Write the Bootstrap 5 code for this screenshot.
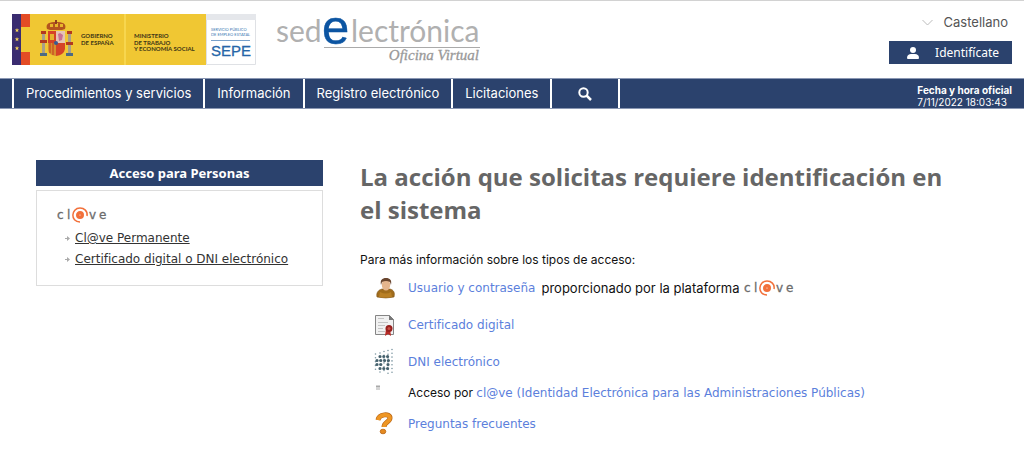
<!DOCTYPE html>
<html lang="es">
<head>
<meta charset="utf-8">
<meta name="viewport" content="width=device-width, initial-scale=1">
<title>SEPE - Sede electrónica</title>
<link rel="stylesheet" href="https://cdn.jsdelivr.net/npm/bootstrap@5.3.0/dist/css/bootstrap.min.css">
<style>
:root { --navy: #2b426d; --link: #5c7fdc; }
body { font-family: Inter, sans-serif; font-size: 12px; line-height: 18px; color: #111; background: #fff; border-top: 1px solid #d2d2d2; }
.verd { font-family: "DejaVu Sans", Verdana, sans-serif; font-size: 12px; }
.top-bar { padding: 13px 12px; }
.brand-row { gap: 19px; }
.user-tools { gap: 11px; }
.lang { border: 0; background: none; padding: 0 4px 0 0; font-size: 13px; line-height: 16px; color: #555; gap: 11px; }
.ident { background: var(--navy); color: #fff; border: 0; border-radius: 0; font: 12px/23px "Noto Sans", sans-serif; padding: 0 13px 0 18px; gap: 16px; }
.main-nav { background: var(--navy); border-top: 1px solid #8a97b3; border-bottom: 1px solid #8a97b3; padding: 0 12px; }
.main-nav ul { border-left: 2px solid #fff; }
.main-nav .nav-link { color: #fff; font-size: 13px; line-height: 29px; padding: 0 12px; border-right: 2px solid #fff; }
.main-nav button.nav-link { background: none; padding: 0 26px; border-radius: 0; border-width: 0 2px 0 0; height: 29px; }
.clock { color: #fff; font-size: 10px; line-height: 12px; padding-top: 5px; }
.content-row { padding: 51px 36px 16px; gap: 37px; }
.side { flex: 0 0 287px; }
.side h2 { background: var(--navy); color: #fff; font: bold 13px/26px "Noto Sans", sans-serif; margin: 0 0 4px; text-align: center; }
.side-box { border: 1px solid #ddd; padding: 15px 20px; }
.side-box li { line-height: 21px; gap: 5px; padding-left: 8px; }
.side-box a { color: #333; }
.info { max-width: 592px; }
.info h1 { font: bold 24px/33px "Open Sans", sans-serif; color: #666; margin: 0 0 25px; }
.info p { margin: 0 0 3px; }
.info ul { gap: 5px; padding-left: 14px; }
.info li { gap: 12px; min-height: 32px; }
.info li.compact { min-height: 20px; }
.info li a { color: var(--link); text-decoration: none; }
.ico { flex: 0 0 22px; }
.platform { font-size: 13px; margin: 0 4px 0 6px; }
</style>
</head>
<body>
<header>
  <div class="top-bar d-flex justify-content-between align-items-start">
    <div class="brand-row d-flex">
      <svg width="245" height="51" viewBox="0 0 245 51" role="img" aria-label="Gobierno de España, SEPE">
        <path fill="#f0c733" d="M0 0h194v51H0z"/>
        <path fill="#3a2c70" d="M0 0h9v51H0z"/><path fill="#e34b25" d="M9 0h9v13H9zM9 38h9v13H9z"/>
        <path fill="#f7d64e" d="M112 0h2v51h-2z"/>
        <g fill="#f4d258"><path id="st" d="M5 14l.6 1.600h1.700l-1.400 1 .5 1.700L5 17.300l-1.400 1 .5-1.700-1.400-1h1.700z"/><use href="#st" y="9"/><use href="#st" y="18"/></g>
        <g>
          <path fill="#b4541e" d="M35 15c-2-6 3-7 9-7s11 1 9 7l-3 1H38z"/><path fill="#e8b72c" d="M38 10h3v3h-3zM43 9h3v4h-3zM48 10h3v3h-3z"/><path fill="#8e3b20" d="M43 6h2v4h-2z"/>
          <path fill="#a8a08a" d="M30 20h3v19h-3zM56 20h3v19h-3z"/>
          <path fill="#b3391f" d="M29 17h5v3h-5zM55 17h5v3h-5zM28 26h7v3h-7zM54 28h7v3h-7z"/>
          <path fill="#4d6b83" d="M28 39h7v3h-7zM54 39h7v3h-7z"/>
          <path fill="#d54327" d="M36 17h8v12h-8zM44 29h9v6q-1 6-9 7z"/><path fill="#e5c4b5" d="M44 17h9v12h-9z"/><path fill="#c87093" d="M46 20l2-1 3 2-1 5-3 1z"/>
          <path fill="#d6902d" d="M36 29h8v13q-8-1-8-7z"/><path stroke="#c53721" d="M38 29v10M41 29v12"/><path fill="#e6b32d" d="M38 20h4v6h-4z"/><circle cx="44" cy="29" r="2" fill="#375b93"/>
        </g>
        <g fill="#3d3516" font-family="Lato, sans-serif" font-weight="bold" font-size="6">
          <text x="69" y="24">GOBIERNO</text><text x="69" y="31">DE ESPAÑA</text>
          <text x="122" y="24">MINISTERIO</text><text x="122" y="31">DE TRABAJO</text><text x="122" y="37">Y ECONOMÍA SOCIAL</text>
        </g>
        <path fill="#fff" stroke="#dfe1e5" d="M194.500.5h49v50h-49z"/><path fill="#e5e7eb" d="M194 0h50v6h-50z"/>
        <g fill="#3977b3" font-family="Lato, sans-serif" font-size="4"><text x="199" y="17">SERVICIO PÚBLICO</text><text x="199" y="22">DE EMPLEO ESTATAL</text></g>
        <path stroke="#78a0ca" d="M199 26.500h39"/>
        <text x="199" y="42" fill="#2566a8" stroke="#2566a8" stroke-width=".3" font-family="Liberation Sans, sans-serif" font-size="15">SEPE</text>
      </svg>
      <svg class="overflow-visible" width="206" height="51" viewBox="0 0 206 51" role="img" aria-label="Sede electrónica, Oficina Virtual">
        <g fill="#b0b0b0" font-family="Lato, sans-serif" font-size="30"><text x="0" y="28">sed</text><text x="75" y="28">lectrónica</text></g>
        <text x="46" y="30" fill="#0c55a2" stroke="#0c55a2" stroke-width=".4" font-family="Liberation Sans, sans-serif" font-size="49">e</text>
        <path stroke="#aaa" d="M48 33.500h156"/>
        <text x="203" y="46" text-anchor="end" fill="#999" stroke="#999" stroke-width=".3" font-family="Liberation Serif, serif" font-style="italic" font-size="15">Oficina Virtual</text>
      </svg>
    </div>
    <div class="user-tools d-flex flex-column align-items-end">
      <button class="lang d-flex align-items-center" type="button"><svg width="11" height="7" fill="none" stroke="#bbb"><path d="M.5 1l5 5 5-5"/></svg>Castellano</button>
      <button class="ident d-flex align-items-center" type="button"><svg width="12" height="12" fill="#fff"><circle cx="6" cy="3" r="3"/><path d="M1 12q-1 0-1-1c0-3 2-4 4-4h4c2 0 4 1 4 4q0 1-1 1z"/></svg>Identifícate</button>
    </div>
  </div>
  <nav class="main-nav d-flex justify-content-between">
    <ul class="nav">
      <li><a class="nav-link" href="#">Procedimientos y servicios</a></li>
      <li><a class="nav-link" href="#">Información</a></li>
      <li><a class="nav-link" href="#">Registro electrónico</a></li>
      <li><a class="nav-link" href="#">Licitaciones</a></li>
      <li><button class="nav-link d-flex align-items-center" type="button" aria-label="Buscar"><svg width="14" height="14" fill="none" stroke="#fff" stroke-width="2"><circle cx="5.500" cy="5.500" r="4.200"/><path stroke-width="2.500" d="M8.500 8.500l4.500 4.500"/></svg></button></li>
    </ul>
    <div class="clock"><strong>Fecha y hora oficial</strong><br>7/11/2022 18:03:43</div>
  </nav>
</header>
<svg class="d-none">
  <symbol id="clave" viewBox="0 0 50 18">
    <g fill="#6c6c6c" stroke="#6c6c6c" stroke-width=".3" font-family="DejaVu Sans, sans-serif" font-size="12"><text x="0" y="13">c</text><text x="10" y="13">l</text><text x="32" y="13">v</text><text x="42" y="13">e</text></g>
    <g fill="none" stroke="#f2703a"><circle cx="23" cy="9" r="2.300" stroke-width="3.400"/><path stroke-width="1.500" d="M30 10c1-5-3-8-7-8-9 0-10 14 0 14"/></g>
  </symbol>
  <symbol id="arrow" viewBox="0 0 5 5"><path fill="#aaa" d="M0 2h2V0l3 2.500L2 5V3H0z"/></symbol>
</svg>
<main class="content-row d-flex">
  <aside class="side">
    <h2>Acceso para Personas</h2>
    <div class="side-box">
      <svg class="d-block" width="50" height="18" role="img" aria-label="Cl@ve"><use href="#clave"/></svg>
      <ul class="list-unstyled verd mb-0 pt-1">
        <li class="d-flex align-items-center"><svg width="5" height="5"><use href="#arrow"/></svg><a href="#">Cl@ve Permanente</a></li>
        <li class="d-flex align-items-center"><svg width="5" height="5"><use href="#arrow"/></svg><a href="#">Certificado digital o DNI electrónico</a></li>
      </ul>
    </div>
  </aside>
  <section class="info flex-grow-1">
    <h1>La acción que solicitas requiere identificación en el sistema</h1>
    <p>Para más información sobre los tipos de acceso:</p>
    <ul class="list-unstyled d-flex flex-column mb-0">
      <li class="d-flex align-items-center">
        <svg class="ico" width="22" height="24" viewBox="0 0 22 24">
          <path fill="#a06c1c" stroke="#80561a" stroke-width=".6" d="M3 21c-1-4 1-7 5-8h8c4 1 5 4 4 8q-8 2-17 0z"/>
          <path fill="#b98026" d="M6 16q6 3 11 0l1 5q-7 1-13 0z"/>
          <ellipse cx="12" cy="9" rx="4.200" ry="5.500" fill="#e5b58d"/>
          <path fill="#69452e" d="M7 9C6 4 8 2 12 2s6 2 5 7l-1-3q-4-2-8 0z"/>
        </svg>
        <span class="d-flex align-items-center"><a class="verd" href="#">Usuario y contraseña</a><span class="platform">proporcionado por la plataforma</span><svg width="50" height="18" role="img" aria-label="Cl@ve"><use href="#clave"/></svg></span>
      </li>
      <li class="d-flex align-items-center">
        <svg class="ico" width="22" height="24" viewBox="0 0 22 24">
          <path fill="#f1f1f1" stroke="#858585" d="M1.500 2.500h14l4 4v15h-18z"/><path fill="#777" d="M15 2l5 5h-5z"/>
          <path fill="none" stroke="#c4c4c4" d="M4 5.500h6M4 9.500h10M4 12.500h7M4 15.500h5M4 18.500h7"/>
          <path fill="#b82a25" d="M12 16l-1 7 3-2 3 2-1-7z"/><circle cx="15" cy="15.500" r="3.500" fill="#97201e"/><circle cx="15" cy="15.500" r="1.500" fill="#c94e43"/>
        </svg>
        <a class="verd" href="#">Certificado digital</a>
      </li>
      <li class="d-flex align-items-center">
        <svg class="ico" width="22" height="28" viewBox="0 0 22 28" fill="none" stroke-linecap="round">
          <g stroke="#7d97a2" stroke-width="1.600" stroke-dasharray="0 3.800"><path d="M1.500 6v16M18 1.500v24M14 2.500v23M10 3.500v22M6 5v19"/></g>
          <g stroke="#45616d" stroke-width="3.200" stroke-dasharray="0 3.800"><path d="M6 8.500h8M3 12.500h12M3 16.500h4M14 16.500h1M6 20.500h8"/></g>
        </svg>
        <a class="verd" href="#">DNI electrónico</a>
      </li>
      <li class="compact d-flex align-items-center">
        <svg class="ico" width="22" height="20" viewBox="0 0 22 20"><path fill="#d4d4d4" d="M2 2h4v5H2z"/><path fill="#a9a9a9" d="M2 3h4v1H2z"/></svg>
        <span>Acceso por <a class="verd" href="#">cl@ve (Identidad Electrónica para las Administraciones Públicas)</a></span>
      </li>
      <li class="d-flex align-items-center">
        <svg class="ico" width="22" height="24" viewBox="0 0 22 24" fill="none">
          <path stroke="#b86414" stroke-width="5" d="M4 8c1-6 12-7 12-2 0 4-6 4-6 9"/><path stroke="#ee9624" stroke-width="3.800" d="M4 8c1-6 12-7 12-2 0 4-6 4-6 9"/>
          <ellipse cx="9" cy="19.500" rx="2.800" ry="2.300" fill="#e58a20" stroke="#b86414" stroke-width=".8"/>
        </svg>
        <a class="verd" href="#">Preguntas frecuentes</a>
      </li>
    </ul>
  </section>
</main>
<script src="https://cdn.jsdelivr.net/npm/bootstrap@5.3.0/dist/js/bootstrap.bundle.min.js"></script>
</body>
</html>
